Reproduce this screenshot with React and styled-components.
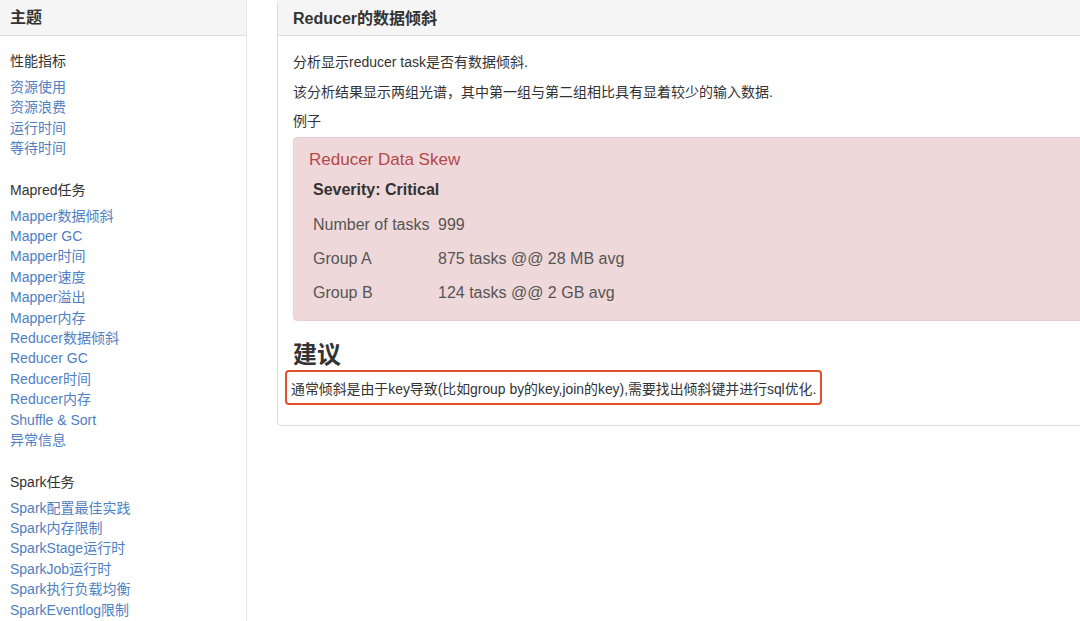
import React from "react";
import styled, { createGlobalStyle } from "styled-components";

const GlobalStyle = createGlobalStyle`
    html, body {
        margin: 0;
        padding: 0;
        background: #fff;
        overflow: hidden;
    }
    body {
        font-family: "Liberation Sans", "Noto Sans CJK SC", sans-serif;
        color: #333;
    }
`;

const groups = [
    {
        title: "性能指标",
        links: ["资源使用", "资源浪费", "运行时间", "等待时间"],
    },
    {
        title: "Mapred任务",
        links: [
            "Mapper数据倾斜",
            "Mapper GC",
            "Mapper时间",
            "Mapper速度",
            "Mapper溢出",
            "Mapper内存",
            "Reducer数据倾斜",
            "Reducer GC",
            "Reducer时间",
            "Reducer内存",
            "Shuffle & Sort",
            "异常信息",
        ],
    },
    {
        title: "Spark任务",
        links: [
            "Spark配置最佳实践",
            "Spark内存限制",
            "SparkStage运行时",
            "SparkJob运行时",
            "Spark执行负载均衡",
            "SparkEventlog限制",
        ],
    },
];

const rows = [
    { label: "Number of tasks", value: "999" },
    { label: "Group A", value: "875 tasks @@ 28 MB avg" },
    { label: "Group B", value: "124 tasks @@ 2 GB avg" },
];

function App() {
    return (
        <>
            <GlobalStyle />
            <Page>
                <Sidebar>
                    <SideHeader>主题</SideHeader>
                    <SideBody>
                        {groups.map((group) => (
                            <Group key={group.title}>
                                <GroupTitle>{group.title}</GroupTitle>
                                {group.links.map((link) => (
                                    <Link key={link} href="#">
                                        {link}
                                    </Link>
                                ))}
                            </Group>
                        ))}
                    </SideBody>
                </Sidebar>
                <Main>
                    <Panel>
                        <PanelHeader>Reducer的数据倾斜</PanelHeader>
                        <PanelBody>
                            <Text>分析显示reducer task是否有数据倾斜.</Text>
                            <Text>
                                该分析结果显示两组光谱，其中第一组与第二组相比具有显着较少的输入数据.
                            </Text>
                            <Text last>例子</Text>
                            <Alert>
                                <AlertTitle>Reducer Data Skew</AlertTitle>
                                <Severity>Severity: Critical</Severity>
                                <Table>
                                    <tbody>
                                        {rows.map((row) => (
                                            <tr key={row.label}>
                                                <Label>{row.label}</Label>
                                                <Value>{row.value}</Value>
                                            </tr>
                                        ))}
                                    </tbody>
                                </Table>
                            </Alert>
                            <Heading>建议</Heading>
                            <Highlight>
                                通常倾斜是由于key导致(比如group by的key,join的key),需要找出倾斜键并进行sql优化.
                            </Highlight>
                        </PanelBody>
                    </Panel>
                </Main>
            </Page>
        </>
    );
}

export default App;

const Page = styled.div`
    display: flex;
    width: 1080px;
    height: 621px;
    overflow: hidden;
`;
const Sidebar = styled.div`
    width: 246px;
    flex-shrink: 0;
    border-right: 1px solid #e6e6e6;
`;
const SideHeader = styled.div`
    height: 35px;
    line-height: 35px;
    padding: 0 10px;
    background-color: #f5f5f5;
    border-bottom: 1px solid #dedede;
    font-size: 16px;
    font-weight: bold;
    color: #333;
`;
const SideBody = styled.div`
    padding: 15px 10px;
`;
const Group = styled.div`
    display: flex;
    flex-direction: column;
    align-items: flex-start;
    margin-bottom: 21px;
`;
const GroupTitle = styled.div`
    font-size: 14px;
    line-height: 20px;
    color: #333;
    margin-bottom: 6px;
`;
const Link = styled.a`
    font-size: 14px;
    line-height: 20.4px;
    color: #4f80c2;
    text-decoration: none;
`;
const Main = styled.div`
    flex: 1;
    padding-left: 30px;
    min-width: 0;
`;
const Panel = styled.div`
    width: 840px;
    margin-top: -1px;
    border: 1px solid #dedede;
    border-radius: 4px;
    background: #fff;
`;
const PanelHeader = styled.div`
    box-sizing: border-box;
    height: 36px;
    line-height: 35px;
    padding: 1px 15px 0;
    background-color: #f5f5f5;
    border-bottom: 1px solid #dedede;
    font-size: 16px;
    font-weight: bold;
    color: #333;
`;
const PanelBody = styled.div`
    padding: 16px 15px 20px;
`;
const Text = styled.p`
    margin: 0 0 ${(p) => (p.last ? "6px" : "9.5px")};
    font-size: 14px;
    line-height: 20px;
    color: #333;
`;
const Alert = styled.div`
    padding: 11px 15px 10px;
    background-color: #efd8d9;
    border: 1px solid #ead0d2;
    border-radius: 4px;
`;
const AlertTitle = styled.div`
    font-size: 17px;
    line-height: 22px;
    color: #b4484a;
    margin-bottom: 8px;
`;
const Severity = styled.div`
    padding-left: 4px;
    font-size: 16px;
    line-height: 22px;
    font-weight: bold;
    color: #333;
    margin-bottom: 7px;
`;
const Table = styled.table`
    border-collapse: collapse;
    margin-left: 4px;
    font-size: 16px;
    color: #555;
`;
const Label = styled.td`
    width: 125px;
    height: 34px;
    padding: 0;
    white-space: nowrap;
`;
const Value = styled.td`
    height: 34px;
    padding: 0;
`;
const Heading = styled.h3`
    margin: 19px 0 0;
    font-size: 24px;
    line-height: 30px;
    font-weight: bold;
    color: #333;
`;
const Highlight = styled.div`
    display: inline-block;
    margin-left: -8px;
    padding: 7px 4px 4px 4px;
    border: 2px solid #e0512a;
    border-radius: 4px;
    font-size: 13.9px;
    line-height: 20px;
    color: #333;
`;
